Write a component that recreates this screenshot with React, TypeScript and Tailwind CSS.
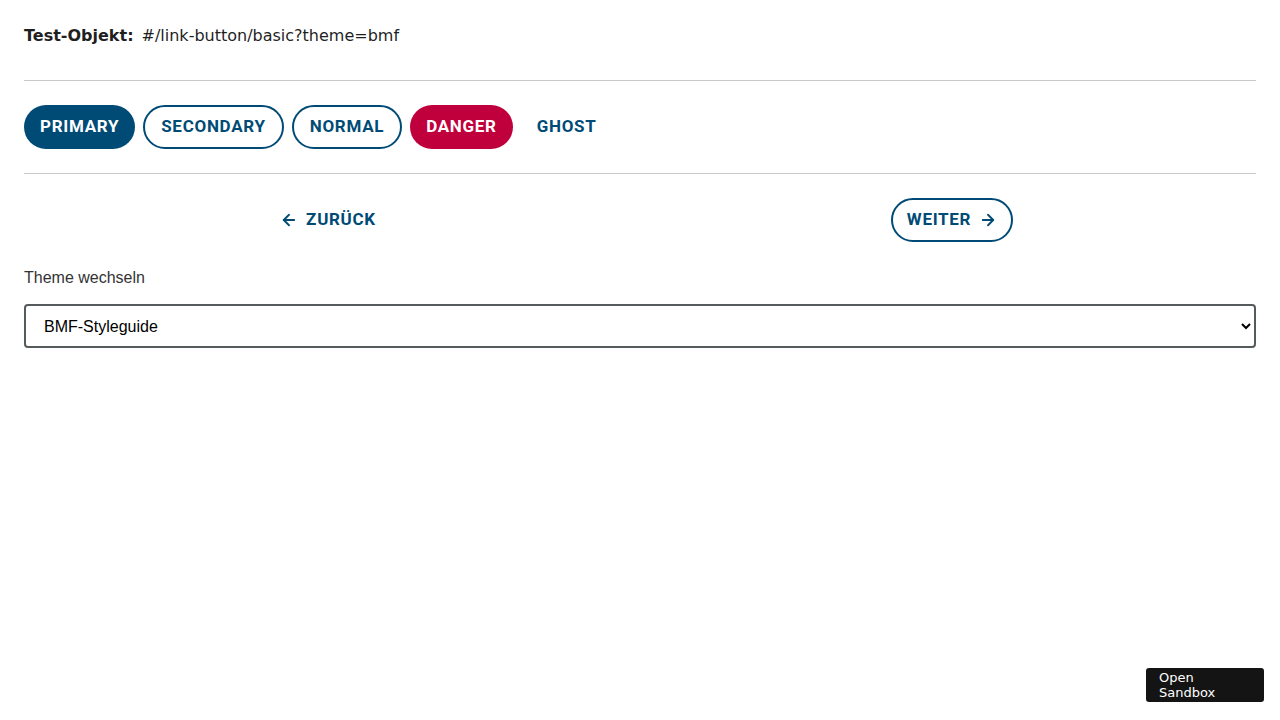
import React from 'react';

const btn =
  "h-11 rounded-full px-4 text-[17px] font-bold uppercase tracking-[0.7px] font-['Roboto',sans-serif] flex items-center";

function ArrowLeft() {
  return (
    <svg width="18" height="18" viewBox="0 0 24 24" fill="none" stroke="currentColor" strokeWidth="2.4" strokeLinecap="round" strokeLinejoin="round">
      <path d="M19 12H5" />
      <path d="M12 19l-7-7 7-7" />
    </svg>
  );
}

function ArrowRight() {
  return (
    <svg width="18" height="18" viewBox="0 0 24 24" fill="none" stroke="currentColor" strokeWidth="2.4" strokeLinecap="round" strokeLinejoin="round">
      <path d="M5 12h14" />
      <path d="M12 5l7 7-7 7" />
    </svg>
  );
}

export default function App() {
  return (
    <div className="min-h-screen bg-white px-6 pt-[25px] font-['DejaVu_Sans',sans-serif] text-[#1f1f1f]">
      <div className="flex items-center gap-2 text-[16px] leading-[22px]">
        <strong className="font-bold">Test-Objekt:</strong>
        <span>#/link-button/basic?theme=bmf</span>
      </div>

      <hr className="mt-[33px] border-t border-[#c8c8c8]" />

      <div className="flex items-center gap-2 py-6">
        <button className={`${btn} bg-[#004b76] text-white`}>Primary</button>
        <button className={`${btn} border-2 border-[#004b76] text-[#004b76] bg-white`}>Secondary</button>
        <button className={`${btn} border-2 border-[#004b76] text-[#004b76] bg-white`}>Normal</button>
        <button className={`${btn} bg-[#c0003c] text-white`}>Danger</button>
        <button className={`${btn} text-[#004b76]`}>Ghost</button>
      </div>

      <hr className="border-t border-[#c8c8c8]" />

      <div className="grid grid-cols-2 py-6">
        <div className="flex justify-center">
          <a className={`${btn} gap-2 text-[#004b76] mr-2`}>
            <ArrowLeft />
            Zurück
          </a>
        </div>
        <div className="flex justify-center">
          <a className={`${btn} gap-2 border-2 border-[#004b76] text-[#004b76] ml-2 pl-[14px] pr-[14px]`}>
            Weiter
            <ArrowRight />
          </a>
        </div>
      </div>

      <label className="block text-[16px] leading-[22px] text-[#333] font-['Liberation_Sans',sans-serif] mt-[1px]">
        Theme wechseln
      </label>

      <select className="mt-[15px] block h-11 w-full rounded-[4px] border-2 border-[#555a5c] bg-white pl-[14px] pr-2 text-[16px] text-black font-['Liberation_Sans',sans-serif]">
        <option>BMF-Styleguide</option>
        <option>Default</option>
      </select>

      <button className="fixed bottom-[18px] right-4 w-[118px] h-[34px] rounded-[3px] bg-[#141414] text-white text-[13px] leading-[15px] text-left pl-[13px] pr-6 font-['DejaVu_Sans',sans-serif]">
        Open Sandbox
      </button>
    </div>
  );
}
